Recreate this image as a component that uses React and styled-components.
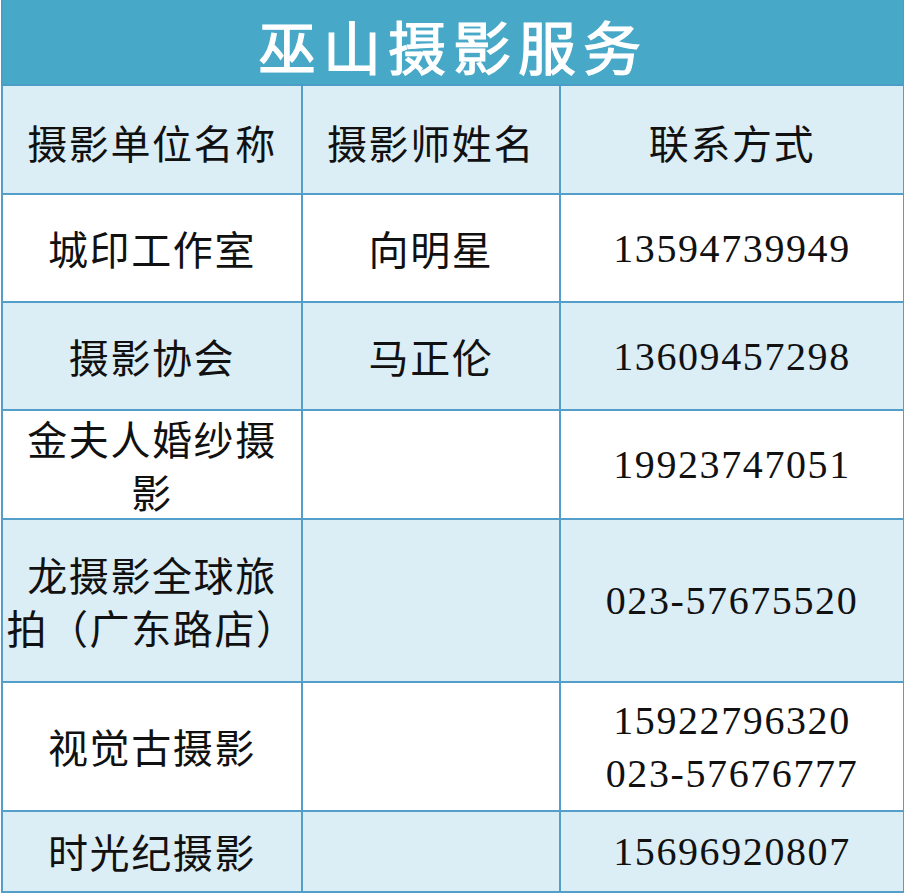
import React from "react";
import styled, { createGlobalStyle } from "styled-components";

const rows = [
  { name: ["城印工作室"], person: "向明星", phone: ["13594739949"], height: 108 },
  { name: ["摄影协会"], person: "马正伦", phone: ["13609457298"], height: 108, tint: true },
  { name: ["金夫人婚纱摄", "影"], person: "", phone: ["19923747051"], height: 109 },
  { name: ["龙摄影全球旅", "拍（广东路店）"], person: "", phone: ["023-57675520"], height: 163, tint: true },
  { name: ["视觉古摄影"], person: "", phone: ["15922796320", "023-57676777"], height: 129 },
  { name: ["时光纪摄影"], person: "", phone: ["15696920807"], height: 81, tint: true },
];

const App = () => {
  return (
    <Page>
      <GlobalStyle />
      <Table>
        <colgroup>
          <col style={{ width: 300 }} />
          <col style={{ width: 258 }} />
          <col style={{ width: 344 }} />
        </colgroup>
        <thead>
          <Row $height={85}>
            <TitleCell colSpan={3}>巫山摄影服务</TitleCell>
          </Row>
          <Row $height={109} $tint>
            <HeadCell>摄影单位名称</HeadCell>
            <HeadCell>摄影师姓名</HeadCell>
            <HeadCell>联系方式</HeadCell>
          </Row>
        </thead>
        <tbody>
          {rows.map((r, i) => (
            <Row key={i} $height={r.height} $tint={r.tint}>
              <TextCell>
                {r.name.map((l, j) => (
                  <Line key={j}>{l}</Line>
                ))}
              </TextCell>
              <TextCell>{r.person}</TextCell>
              <NumberCell>
                {r.phone.map((l, j) => (
                  <Line key={j}>{l}</Line>
                ))}
              </NumberCell>
            </Row>
          ))}
        </tbody>
      </Table>
    </Page>
  );
};

const GlobalStyle = createGlobalStyle`
  html, body {
    margin: 0;
    padding: 0;
    background: #ffffff;
  }
`;

const Page = styled.div`
  width: 904px;
  overflow: hidden;
`;

const Table = styled.table`
  width: 903px;
  table-layout: fixed;
  border-collapse: collapse;
  margin-left: 1px;
`;

const Row = styled.tr`
  height: ${(p) => p.$height}px;
  background: ${(p) => (p.$tint ? "#dbedf5" : "#ffffff")};
`;

const TitleCell = styled.th`
  padding: 6px 0 0;
  background: #47a8c8;
  border: 2px solid #4a9dc6;
  border-top: none;
  color: #ffffff;
  font-family: "Noto Sans CJK SC", sans-serif;
  font-size: 58px;
  font-weight: 400;
  -webkit-text-stroke: 1.2px #ffffff;
  letter-spacing: 7px;
  line-height: 76px;
  text-align: center;
  vertical-align: middle;
`;

const Cell = styled.td`
  padding: 0;
  border: 2px solid #539fca;
  color: #111111;
  text-align: center;
  vertical-align: middle;
  line-height: 53px;
`;

const HeadCell = styled(Cell).attrs({ as: "th" })`
  font-family: "Noto Sans CJK SC", sans-serif;
  font-size: 40px;
  font-weight: 400;
  letter-spacing: 1.6px;
  padding-top: 6px;
`;

const TextCell = styled(Cell)`
  font-family: "Noto Sans CJK SC", sans-serif;
  font-size: 40px;
  letter-spacing: 1.6px;
`;

const NumberCell = styled(Cell)`
  font-family: "Liberation Serif", serif;
  font-size: 40px;
  letter-spacing: 1.6px;
`;

const Line = styled.div`
  white-space: nowrap;
`;

export default App;
